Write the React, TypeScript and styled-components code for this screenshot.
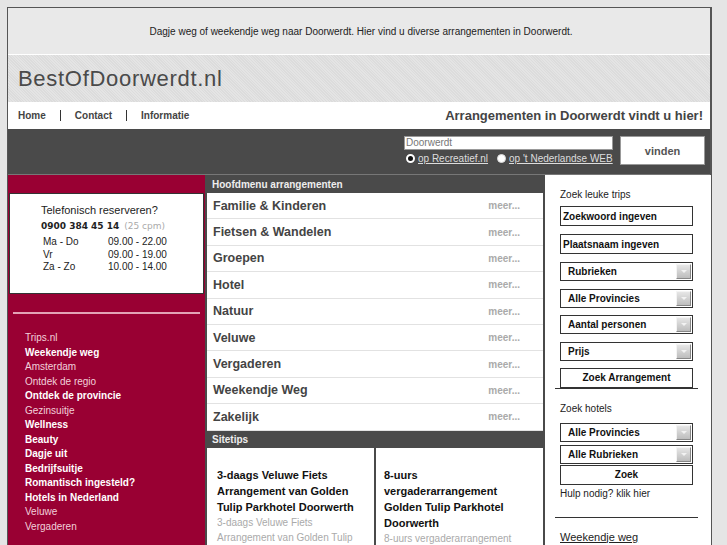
import React from 'react';
import styled, { createGlobalStyle } from 'styled-components';

const GlobalStyle = createGlobalStyle`
  body {
    margin: 0;
    background: #e5e5e5;
    font-family: "Liberation Sans", Arial, sans-serif;
    color: #222;
  }
`;

const Page = styled.div`
  padding: 7px 0 0 7px;
`;

const Frame = styled.div`
  width: 705px;
  box-sizing: border-box;
  border: 1px solid #555;
  border-right-width: 2px;
  background: #4a4a4a;
`;

const TopLine = styled.div`
  height: 46px;
  display: flex;
  align-items: center;
  justify-content: center;
  padding-left: 4px;
  background: #e9e9e9;
  border-bottom: 1px solid #fff;
  font-size: 10px;
  color: #222;
`;

const LogoBand = styled.div`
  height: 47px;
  display: flex;
  align-items: center;
  padding-left: 10px;
  background: repeating-linear-gradient(45deg, #e4e4e4 0 1px, #dcdcdc 1px 2px);
`;

const Logo = styled.div`
  font-size: 22px;
  letter-spacing: 0.7px;
  color: #4a4a4a;
  padding-top: 1px;
`;

const NavBar = styled.div`
  height: 27px;
  display: flex;
  align-items: center;
  justify-content: space-between;
  padding: 0 7px 0 10px;
  background: #fff;
`;

const NavLinks = styled.div`
  display: flex;
  align-items: center;
  gap: 14px;
  font-size: 10px;
  font-weight: bold;
  color: #444;
`;

const NavSeparator = styled.span`
  width: 1px;
  height: 11px;
  background: #333;
`;

const Slogan = styled.div`
  font-size: 13px;
  font-weight: bold;
  color: #444;
`;

const SearchBand = styled.div`
  height: 46px;
  box-sizing: border-box;
  display: flex;
  justify-content: flex-end;
  gap: 7px;
  padding: 7px 5px 0 0;
  border-bottom: 1px solid #777;
`;

const SearchForm = styled.div`
  width: 209px;
  display: flex;
  flex-direction: column;
  gap: 3px;
`;

const SearchInput = styled.div`
  height: 14px;
  box-sizing: border-box;
  background: #fff;
  border: 1px solid #999;
  font-size: 10px;
  line-height: 12px;
  color: #777;
  padding-left: 1px;
`;

const RadioRow = styled.div`
  display: flex;
  align-items: center;
  gap: 3px;
  white-space: nowrap;
  font-size: 10px;
  color: #ddd;
  padding-left: 2px;
`;

const Radio = styled.span<{ $checked?: boolean }>`
  flex: none;
  width: 9px;
  height: 9px;
  box-sizing: border-box;
  border-radius: 50%;
  background: ${({ $checked }) => ($checked ? '#111' : '#fff')};
  border: ${({ $checked }) => ($checked ? '2px solid #fff' : '1px solid #ddd')};
  margin-left: ${({ $checked }) => ($checked ? '0' : '6px')};
`;

const RadioLabel = styled.span`
  text-decoration: underline;
`;

const FindButton = styled.div`
  width: 85px;
  height: 29px;
  box-sizing: border-box;
  background: #fff;
  border: 1px solid #999;
  display: flex;
  align-items: center;
  justify-content: center;
  font-size: 11px;
  font-weight: bold;
  color: #555;
`;

const Main = styled.div`
  display: grid;
  grid-template-columns: 197px 336px 166px;
  gap: 2px;
  align-items: start;
`;

const LeftCol = styled.div`
  background: #990033;
  padding-top: 18px;
  min-height: 380px;
`;

const PhoneBox = styled.div`
  margin: 0 1px;
  height: 101px;
  box-sizing: border-box;
  background: #fff;
  border: 1px solid #333;
  padding: 9px 0 0 31px;
  color: #222;
`;

const PhoneTitle = styled.div`
  font-size: 11px;
  line-height: 14px;
`;

const PhoneNumber = styled.div`
  margin-top: 2px;
  font-family: "DejaVu Sans", Verdana, sans-serif;
  font-size: 9px;
  line-height: 14px;
  font-weight: bold;
  color: #222;

  span {
    font-weight: normal;
    color: #aaa;
    margin-left: 5px;
  }
`;

const Hours = styled.div`
  margin-top: 3px;
  padding-left: 2px;
  display: grid;
  grid-template-columns: 65px auto;
  font-size: 10px;
  line-height: 12.5px;
`;

const PinkRule = styled.div`
  height: 2px;
  margin: 18px 5px 0;
  background: #e3a3b6;
`;

const SideLinks = styled.div`
  padding: 17px 0 14px 17px;
  display: flex;
  flex-direction: column;
`;

const SideLink = styled.span<{ $bold?: boolean }>`
  font-size: 10px;
  line-height: 14.5px;
  font-weight: ${({ $bold }) => ($bold ? 'bold' : 'normal')};
  color: ${({ $bold }) => ($bold ? '#fff' : '#f2d0da')};
`;

const MiddleCol = styled.div`
  background: #fff;
`;

const BarTitle = styled.div<{ $height: number }>`
  height: ${({ $height }) => $height}px;
  background: #4a4a4a;
  display: flex;
  align-items: center;
  padding-left: 5px;
  font-size: 10px;
  font-weight: bold;
  color: #eee;
`;

const MenuRow = styled.div`
  height: 26.4px;
  box-sizing: border-box;
  border-bottom: 1px solid #e2e2e2;
  display: flex;
  align-items: center;
  justify-content: space-between;
  padding: 0 23px 0 6px;
`;

const MenuTitle = styled.span`
  font-size: 12.5px;
  font-weight: bold;
  color: #444;
`;

const More = styled.span`
  font-size: 10px;
  font-weight: bold;
  color: #aaa;
`;

const Tips = styled.div`
  display: grid;
  grid-template-columns: 1fr 1fr;
  gap: 2px;
  background: #4a4a4a;
`;

const TipCard = styled.div<{ $pad: number }>`
  background: #fff;
  padding: 19px 14px 10px ${({ $pad }) => $pad}px;
  min-height: 120px;
`;

const TipTitle = styled.div`
  font-size: 11px;
  font-weight: bold;
  line-height: 16px;
  color: #111;
`;

const TipText = styled.div`
  font-size: 10px;
  line-height: 15px;
  color: #aaa;
`;

const RightCol = styled.div`
  background: #fff;
  padding: 14px 18px 20px 15px;
  min-height: 380px;
  display: flex;
  flex-direction: column;
`;

const SmallText = styled.div<{ $top?: number }>`
  font-size: 10px;
  line-height: 12px;
  color: #222;
  margin-top: ${({ $top = 0 }) => $top}px;
`;

const Field = styled.div<{ $top: number }>`
  height: 20px;
  box-sizing: border-box;
  margin-top: ${({ $top }) => $top}px;
  border: 1px solid #333;
  display: flex;
  align-items: center;
  padding-left: 2px;
  font-size: 10px;
  font-weight: bold;
  color: #111;
`;

const Select = styled.div<{ $top: number }>`
  height: 19px;
  box-sizing: border-box;
  margin-top: ${({ $top }) => $top}px;
  border: 1px solid #333;
  display: flex;
  align-items: center;
  justify-content: space-between;
  padding: 1px 1px 1px 7px;
  font-size: 10px;
  font-weight: bold;
  color: #111;
`;

const Arrow = styled.span`
  width: 15px;
  height: 15px;
  box-sizing: border-box;
  background: linear-gradient(#e6e6e6, #bdbdbd);
  border: 1px solid;
  border-color: #f4f4f4 #888 #888 #f4f4f4;
  display: flex;
  align-items: center;
  justify-content: center;

  &::after {
    content: '';
    border-left: 3px solid transparent;
    border-right: 3px solid transparent;
    border-top: 3px solid #f2f2f2;
  }
`;

const Button = styled.div<{ $top: number }>`
  height: 20px;
  box-sizing: border-box;
  margin-top: ${({ $top }) => $top}px;
  border: 1px solid #333;
  display: flex;
  align-items: center;
  justify-content: center;
  font-size: 10px;
  font-weight: bold;
  color: #111;
`;

const Rule = styled.div<{ $top: number }>`
  height: 1px;
  margin: ${({ $top }) => $top}px -5px 0;
  background: #333;
`;

const UnderLink = styled.div`
  margin-top: 13px;
  font-size: 11px;
  color: #222;
  text-decoration: underline;
`;

const menu = [
  'Familie & Kinderen',
  'Fietsen & Wandelen',
  'Groepen',
  'Hotel',
  'Natuur',
  'Veluwe',
  'Vergaderen',
  'Weekendje Weg',
  'Zakelijk',
];

const sideLinks: [string, boolean][] = [
  ['Trips.nl', false],
  ['Weekendje weg', true],
  ['Amsterdam', false],
  ['Ontdek de regio', false],
  ['Ontdek de provincie', true],
  ['Gezinsuitje', false],
  ['Wellness', true],
  ['Beauty', true],
  ['Dagje uit', true],
  ['Bedrijfsuitje', true],
  ['Romantisch ingesteld?', true],
  ['Hotels in Nederland', true],
  ['Veluwe', false],
  ['Vergaderen', false],
];

const hours = [
  ['Ma - Do', '09.00 - 22.00'],
  ['Vr', '09.00 - 19.00'],
  ['Za - Zo', '10.00 - 14.00'],
];

const App: React.FC = () => (
  <Page>
    <GlobalStyle />
    <Frame>
      <TopLine>
        Dagje weg of weekendje weg naar Doorwerdt. Hier vind u diverse arrangementen in Doorwerdt.
      </TopLine>
      <LogoBand>
        <Logo>BestOfDoorwerdt.nl</Logo>
      </LogoBand>
      <NavBar>
        <NavLinks>
          <span>Home</span>
          <NavSeparator />
          <span>Contact</span>
          <NavSeparator />
          <span>Informatie</span>
        </NavLinks>
        <Slogan>Arrangementen in Doorwerdt vindt u hier!</Slogan>
      </NavBar>
      <SearchBand>
        <SearchForm>
          <SearchInput>Doorwerdt</SearchInput>
          <RadioRow>
            <Radio $checked />
            <RadioLabel>op Recreatief.nl</RadioLabel>
            <Radio />
            <RadioLabel>op 't Nederlandse WEB</RadioLabel>
          </RadioRow>
        </SearchForm>
        <FindButton>vinden</FindButton>
      </SearchBand>

      <Main>
        <LeftCol>
          <PhoneBox>
            <PhoneTitle>Telefonisch reserveren?</PhoneTitle>
            <PhoneNumber>
              0900 384 45 14<span>(25 cpm)</span>
            </PhoneNumber>
            <Hours>
              {hours.map(([day, time]) => (
                <React.Fragment key={day}>
                  <span>{day}</span>
                  <span>{time}</span>
                </React.Fragment>
              ))}
            </Hours>
          </PhoneBox>
          <PinkRule />
          <SideLinks>
            {sideLinks.map(([label, bold]) => (
              <SideLink key={label} $bold={bold}>
                {label}
              </SideLink>
            ))}
          </SideLinks>
        </LeftCol>

        <MiddleCol>
          <BarTitle $height={18}>Hoofdmenu arrangementen</BarTitle>
          {menu.map((item) => (
            <MenuRow key={item}>
              <MenuTitle>{item}</MenuTitle>
              <More>meer...</More>
            </MenuRow>
          ))}
          <BarTitle $height={17}>Sitetips</BarTitle>
          <Tips>
            <TipCard $pad={10}>
              <TipTitle>3-daags Veluwe Fiets Arrangement van Golden Tulip Parkhotel Doorwerth</TipTitle>
              <TipText>3-daags Veluwe Fiets Arrangement van Golden Tulip Parkhotel</TipText>
            </TipCard>
            <TipCard $pad={8}>
              <TipTitle>8-uurs vergaderarrangement Golden Tulip Parkhotel Doorwerth</TipTitle>
              <TipText>8-uurs vergaderarrangement Golden Tulip Parkhotel</TipText>
            </TipCard>
          </Tips>
        </MiddleCol>

        <RightCol>
          <SmallText>Zoek leuke trips</SmallText>
          <Field $top={5}>Zoekwoord ingeven</Field>
          <Field $top={8}>Plaatsnaam ingeven</Field>
          {['Rubrieken', 'Alle Provincies', 'Aantal personen', 'Prijs'].map((label, i) => (
            <Select key={label} $top={i === 0 ? 8 : 7.5}>
              {label}
              <Arrow />
            </Select>
          ))}
          <Button $top={7}>Zoek Arrangement</Button>
          <Rule $top={0} />
          <SmallText $top={14}>Zoek hotels</SmallText>
          <Select $top={8}>
            Alle Provincies
            <Arrow />
          </Select>
          <Select $top={3}>
            Alle Rubrieken
            <Arrow />
          </Select>
          <Button $top={1}>Zoek</Button>
          <SmallText $top={3}>Hulp nodig? klik hier</SmallText>
          <Rule $top={17} />
          <UnderLink>Weekendje weg</UnderLink>
        </RightCol>
      </Main>
    </Frame>
  </Page>
);

export default App;
